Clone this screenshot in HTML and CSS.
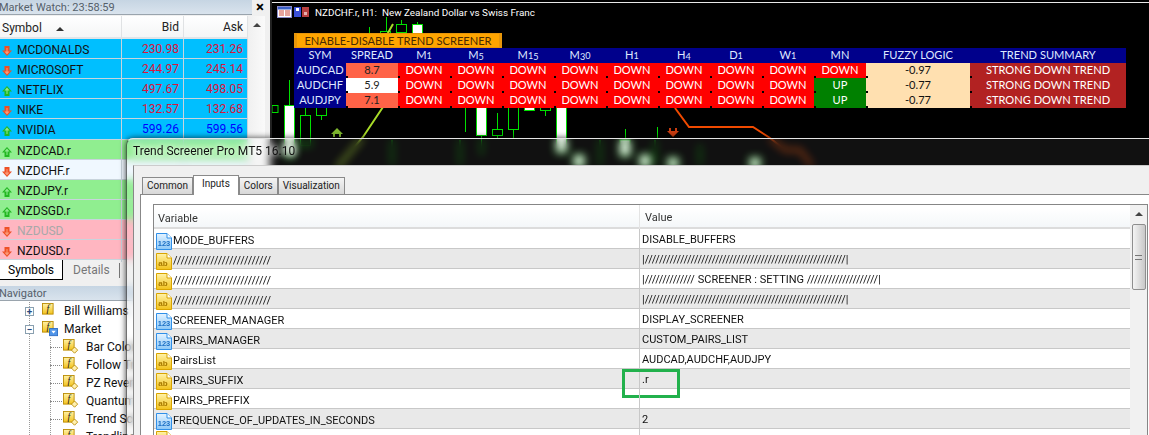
FILE: index.html
```html
<!DOCTYPE html>
<html lang="en">
<head>
<meta charset="utf-8">
<title>Trend Screener Pro MT5</title>
<link rel="stylesheet" href="styles.css">
</head>
<body>
<svg class="defs" width="0" height="0" aria-hidden="true">
  <defs>
    <linearGradient id="gy" x1="0" y1="0" x2="0" y2="1"><stop offset="0" stop-color="#fff2a8"/><stop offset="1" stop-color="#f2c21c"/></linearGradient>
    <linearGradient id="gb" x1="0" y1="0" x2="0" y2="1"><stop offset="0" stop-color="#e4f3ff"/><stop offset="1" stop-color="#8cc8f8"/></linearGradient>
    <symbol id="up" viewBox="0 0 10 10"><path d="M5 0 10 5.500H7.500V10H2.500V5.500H0Z" fill="#22b822"/><path d="M5 1.500 7.500 4.500H5.500V8H4.500V4.500H2.500Z" fill="#8fe88f"/></symbol>
    <symbol id="down" viewBox="0 0 10 10"><path d="M5 10 10 4.500H7.500V0H2.500V4.500H0Z" fill="#ee5026"/><path d="M5 8.500 7.500 5.500H5.500V2H4.500V5.500H2.500Z" fill="#fb9a78"/></symbol>
    <symbol id="num" viewBox="0 0 16 17"><path d="M.5.5H11L15.500 5V16.500H.5Z" fill="url(#gb)" stroke="#2f8fe8"/><path d="M11 .5V5H15.500" fill="#fff" stroke="#2f8fe8"/><text x="8" y="12.500" font-family="Liberation Sans" font-size="7.500" font-weight="700" fill="#1b6fc4" text-anchor="middle">123</text></symbol>
    <symbol id="str" viewBox="0 0 16 17"><path d="M.5.5H11L15.500 5V16.500H.5Z" fill="url(#gy)" stroke="#d9a400"/><path d="M11 .5V5H15.500" fill="#fff" stroke="#d9a400"/><text x="7" y="12.500" font-family="Liberation Sans" font-size="8" font-weight="700" fill="#a87a00" text-anchor="middle">ab</text></symbol>
    <symbol id="fn" viewBox="0 0 18 18"><rect x=".5" y=".5" width="12" height="12" fill="url(#gy)" stroke="#b98a00"/><text x="6.500" y="10.500" font-family="Liberation Serif" font-size="11" font-style="italic" fill="#222" text-anchor="middle">f</text><path d="M13 9 16.500 12.500 13 16 9.500 12.500Z" fill="#fff0b0" stroke="#b98a00"/></symbol>
    <symbol id="fnplain" viewBox="0 0 18 18"><rect x=".5" y=".5" width="12" height="12" fill="url(#gy)" stroke="#b98a00"/><text x="6.500" y="10.500" font-family="Liberation Serif" font-size="11" font-style="italic" fill="#222" text-anchor="middle">f</text></symbol>
    <symbol id="fnfolder" viewBox="0 0 18 18"><rect x=".5" y=".5" width="12" height="12" fill="url(#gy)" stroke="#b98a00"/><text x="6.500" y="10.500" font-family="Liberation Serif" font-size="11" font-style="italic" fill="#222" text-anchor="middle">f</text><rect x="8.500" y="8.500" width="9" height="8" fill="#4f94e8" stroke="#2b6cc4"/><path d="M10.500 11H15.500L13 14Z" fill="#fff"/></symbol>
  </defs>
</svg>

<div class="desktop">
  <aside class="side">
    <section class="watch">
      <header class="panel-title"><span class="panel-name">Market Watch: 23:58:59</span><span class="close">×</span></header>
      <div class="watch-body">
        <div class="quotes">
          <div class="qrow qhead"><span class="qsym">Symbol <i class="sort"></i></span><span class="qnum">Bid</span><span class="qnum">Ask</span></div>
          <div class="qrow blue"><span class="qsym"><svg class="arrow"><use href="#down"/></svg>MCDONALDS</span><span class="qnum red">230.98</span><span class="qnum red">231.26</span></div>
          <div class="qrow blue"><span class="qsym"><svg class="arrow"><use href="#down"/></svg>MICROSOFT</span><span class="qnum red">244.97</span><span class="qnum red">245.14</span></div>
          <div class="qrow blue"><span class="qsym"><svg class="arrow"><use href="#up"/></svg>NETFLIX</span><span class="qnum red">497.67</span><span class="qnum red">498.05</span></div>
          <div class="qrow blue"><span class="qsym"><svg class="arrow"><use href="#down"/></svg>NIKE</span><span class="qnum red">132.57</span><span class="qnum red">132.68</span></div>
          <div class="qrow blue tall"><span class="qsym"><svg class="arrow"><use href="#up"/></svg>NVIDIA</span><span class="qnum bl">599.26</span><span class="qnum bl">599.56</span></div>
          <div class="qrow green"><span class="qsym"><svg class="arrow"><use href="#up"/></svg>NZDCAD.r</span><span></span><span></span></div>
          <div class="qrow alice"><span class="qsym"><svg class="arrow"><use href="#down"/></svg>NZDCHF.r</span><span></span><span></span></div>
          <div class="qrow green"><span class="qsym"><svg class="arrow"><use href="#up"/></svg>NZDJPY.r</span><span></span><span></span></div>
          <div class="qrow green"><span class="qsym"><svg class="arrow"><use href="#up"/></svg>NZDSGD.r</span><span></span><span></span></div>
          <div class="qrow pink off"><span class="qsym"><svg class="arrow"><use href="#down"/></svg>NZDUSD</span><span></span><span></span></div>
          <div class="qrow pink"><span class="qsym"><svg class="arrow"><use href="#down"/></svg>NZDUSD.r</span><span></span><span></span></div>
        </div>
        <div class="vscroll"><i class="tri"></i></div>
      </div>
      <nav class="side-tabs"><span class="stab active">Symbols</span><span class="stab">Details</span></nav>
    </section>
    <section class="nav">
      <header class="panel-title nav-title"><span class="panel-name">Navigator</span></header>
      <ul class="tree">
        <li class="node lvl1"><i class="box">+</i><svg class="fico"><use href="#fnplain"/></svg>Bill Williams</li>
        <li class="node lvl1"><i class="box">−</i><svg class="fico"><use href="#fnfolder"/></svg>Market</li>
        <li class="node lvl2"><svg class="fico"><use href="#fn"/></svg>Bar Colors</li>
        <li class="node lvl2"><svg class="fico"><use href="#fn"/></svg>Follow Trend</li>
        <li class="node lvl2"><svg class="fico"><use href="#fn"/></svg>PZ Reversal</li>
        <li class="node lvl2"><svg class="fico"><use href="#fn"/></svg>Quantum</li>
        <li class="node lvl2"><svg class="fico"><use href="#fn"/></svg>Trend Screener</li>
        <li class="node lvl2"><svg class="fico"><use href="#fn"/></svg>Trendline</li>
      </ul>
    </section>
  </aside>

  <main class="chart">
    <svg class="candles" viewBox="272 0 877 435" width="877" height="435" aria-hidden="true">
      <g fill="none" stroke="#00e000" stroke-width="1">
        <path d="M289.500 80V105M305.500 108V115M321.500 116V120M369.500 27V33M386.500 17V32M401.500 20V24M417.500 22V24M465.500 108V132M497.500 113V129M497.500 135V138M513.500 129V138M545.500 111V116M625.500 129V138M657.500 127V138"/>
        <path d="M289.500 137V160M481.500 135V155M392 140V165M460 140V165M600 140V165M655 140V165M700 145V165"/>
        <rect x="272" y="105.500" width="6" height="7"/>
        <rect x="300.500" y="115.500" width="10" height="30"/>
        <rect x="316.500" y="107.500" width="10" height="8"/>
        <rect x="380.500" y="31.500" width="10" height="4"/>
        <rect x="396.500" y="24.500" width="10" height="8"/>
        <rect x="492.500" y="129.500" width="10" height="6"/>
        <rect x="508.500" y="100.500" width="10" height="29"/>
        <rect x="540.500" y="100.500" width="10" height="10"/>
        <g fill="#fff">
          <rect x="284.500" y="105.500" width="10" height="50"/>
          <rect x="412.500" y="24.500" width="10" height="12"/>
          <rect x="476.500" y="100.500" width="10" height="35"/>
          <rect x="524.500" y="100.500" width="10" height="10"/>
          <rect x="556.500" y="100.500" width="10" height="52"/>
          <rect x="620" y="140" width="10" height="16"/>
          <rect x="574" y="155" width="10" height="12"/>
          <rect x="640" y="155" width="10" height="12"/>
          <rect x="668" y="158" width="10" height="10"/>
          <rect x="750" y="158" width="10" height="10"/>
        </g>
      </g>
      <path d="M337 168 363 137 383 107 384 40 393 24" fill="none" stroke="#a8dc28" stroke-width="2"/>
      <path d="M337 128 343 134H341V137H339V134H335V137H333V134H331Z" fill="#7fb82e"/>
      <path d="M675 108 689 127H753L770 138 785 150H800L812 166" fill="none" stroke="#f04a00" stroke-width="2"/>
      <path d="M673 137 679 131H677V128H675V131H671V128H669V131H667Z" fill="#c83c10"/>
    </svg>
    <div class="chart-head">
      <svg class="cico" viewBox="0 0 15 12"><rect x=".5" y=".5" width="14" height="11" fill="#fff" stroke="#8a8ac8"/><rect x="1" y="1" width="13" height="2.500" fill="#3a60c8"/><path d="M2 5H7M8 5H13M2 7H7M8 7H13M2 9H7M8 9H13" stroke="#d04a3a"/></svg>
      <svg class="cico" viewBox="0 0 15 12"><rect x="0" y="1" width="7" height="10" fill="#3a50d8"/><rect x="8" y="1" width="7" height="10" fill="#b84040"/><rect x="2" y="2" width="3" height="3" fill="#fff"/><rect x="10" y="6" width="3" height="3" fill="#e8b0b0"/></svg>
      <span class="chart-name">NZDCHF.r, H1:&nbsp; New Zealand Dollar vs Swiss Franc</span>
    </div>
    <div class="screener">
      <div class="toggle">ENABLE-DISABLE TREND SCREENER</div>
      <div class="grid">
        <span class="h">SYM</span><span class="h">SPREAD</span><span class="h">M<i class="os">1</i></span><span class="h">M<i class="os low">5</i></span><span class="h">M<i class="os">1</i><i class="os low">5</i></span><span class="h">M<i class="os low">3</i><i class="os">0</i></span><span class="h">H<i class="os">1</i></span><span class="h">H<i class="os low">4</i></span><span class="h">D<i class="os">1</i></span><span class="h">W<i class="os">1</i></span><span class="h">MN</span><span class="h">FUZZY LOGIC</span><span class="h">TREND SUMMARY</span>

        <span class="h">AUDCAD</span><span class="sp">8.7</span><span class="d">DOWN</span><span class="d">DOWN</span><span class="d">DOWN</span><span class="d">DOWN</span><span class="d">DOWN</span><span class="d">DOWN</span><span class="d">DOWN</span><span class="d">DOWN</span><span class="d">DOWN</span><span class="fz">-0.97</span><span class="ts">STRONG DOWN TREND</span>

        <span class="h">AUDCHF</span><span class="sp lo">5.9</span><span class="d">DOWN</span><span class="d">DOWN</span><span class="d">DOWN</span><span class="d">DOWN</span><span class="d">DOWN</span><span class="d">DOWN</span><span class="d">DOWN</span><span class="d">DOWN</span><span class="u">UP</span><span class="fz">-0.77</span><span class="ts">STRONG DOWN TREND</span>

        <span class="h">AUDJPY</span><span class="sp">7.1</span><span class="d">DOWN</span><span class="d">DOWN</span><span class="d">DOWN</span><span class="d">DOWN</span><span class="d">DOWN</span><span class="d">DOWN</span><span class="d">DOWN</span><span class="d">DOWN</span><span class="u">UP</span><span class="fz">-0.77</span><span class="ts">STRONG DOWN TREND</span>
      </div>
    </div>
  </main>

  <section class="dialog">
    <h1 class="dlg-title">Trend Screener Pro MT5 16.10</h1>
    <div class="client">
      <div class="tabs">
        <span class="tab">Common</span><span class="tab active">Inputs</span><span class="tab">Colors</span><span class="tab">Visualization</span>
      </div>
      <div class="tab-body">
        <div class="list">
          <div class="list-main">
            <div class="lrow lhead"><span class="var">Variable</span><span class="val">Value</span></div>
            <div class="lrow"><span class="var"><svg class="tico"><use href="#num"/></svg>MODE_BUFFERS</span><span class="val">DISABLE_BUFFERS</span></div>
            <div class="lrow alt"><span class="var"><svg class="tico"><use href="#str"/></svg><span class="slashes">//////////////////////////</span></span><span class="val vslashes">|/////////////////////////////////////////////////////////|</span></div>
            <div class="lrow"><span class="var"><svg class="tico"><use href="#str"/></svg><span class="slashes">//////////////////////////</span></span><span class="val">|<span class="vslashes">//////////////</span> SCREENER : SETTING <span class="vslashes">////////////////////</span>|</span></div>
            <div class="lrow alt"><span class="var"><svg class="tico"><use href="#str"/></svg><span class="slashes">//////////////////////////</span></span><span class="val vslashes">|/////////////////////////////////////////////////////////|</span></div>
            <div class="lrow"><span class="var"><svg class="tico"><use href="#num"/></svg>SCREENER_MANAGER</span><span class="val">DISPLAY_SCREENER</span></div>
            <div class="lrow alt"><span class="var"><svg class="tico"><use href="#num"/></svg>PAIRS_MANAGER</span><span class="val">CUSTOM_PAIRS_LIST</span></div>
            <div class="lrow"><span class="var"><svg class="tico"><use href="#str"/></svg>PairsList</span><span class="val">AUDCAD,AUDCHF,AUDJPY</span></div>
            <div class="lrow alt"><span class="var"><svg class="tico"><use href="#str"/></svg>PAIRS_SUFFIX</span><span class="val mark">.r</span></div>
            <div class="lrow"><span class="var"><svg class="tico"><use href="#str"/></svg>PAIRS_PREFFIX</span><span class="val"></span></div>
            <div class="lrow alt"><span class="var"><svg class="tico"><use href="#num"/></svg>FREQUENCE_OF_UPDATES_IN_SECONDS</span><span class="val">2</span></div>
            <div class="lrow"><span class="var"><svg class="tico"><use href="#str"/></svg></span><span class="val"></span></div>
          </div>
          <div class="list-scroll"><i class="tri"></i><div class="thumb"><i class="grip"></i></div></div>
        </div>
      </div>
    </div>
  </section>
</div>
</body>
</html>
```
FILE: styles.css
```css
* { box-sizing: border-box; }
html, body { margin: 0; height: 435px; overflow: hidden; background: #f0f0f0; }
body { font-family: "Roboto", "Liberation Sans", sans-serif; font-size: 12px; color: #111; }
.defs { position: absolute; }
.desktop { display: flex; width: 1149px; height: 435px; position: relative; overflow: hidden; }

/* left column */
.side { width: 272px; flex: none; display: flex; flex-direction: column; background: #f0f0f0; border-right: 2px solid #222; }
.panel-title { height: 15px; display: flex; justify-content: space-between; align-items: center; background: linear-gradient(#c6d5e3, #d9e3ed); width: 252px; position: relative; border-bottom: 1px solid #9aa4ad; }
.panel-name { font-size: 11px; color: #55606a; margin-left: -1px; white-space: nowrap; }
.close { position: absolute; left: 256px; top: 0; font-size: 15px; font-weight: 700; color: #000; line-height: 15px; }
.watch-body { display: flex; margin-top: 1px; }
.quotes { width: 248px; flex: none; }
.qrow { display: grid; grid-template-columns: 122px 62px 64px; height: 20px; align-items: stretch; border-bottom: 1px solid #c8d4dc; font-size: 12px; line-height: 21px; }
.qrow > span { border-right: 1px solid #c8d4dc; }
.tall { height: 21px; }
.qhead { height: 23px; background: linear-gradient(#fff, #f4f5f6); line-height: 23px; border-bottom: 2px solid #e0e4e8; color: #222; }
.qhead > span { border-right: 1px solid #e0e2e4; }
.qsym { display: flex; align-items: center; white-space: nowrap; padding: 1px 0 0 2px; }
.sort { width: 0; height: 0; border-left: 4px solid transparent; border-right: 4px solid transparent; border-bottom: 4px solid #333; margin-left: 14px; }
.qnum { text-align: right; padding-right: 4px; }
.arrow { width: 10px; height: 10px; margin-right: 5px; flex: none; }
.blue { background: #00bfff; }
.green { background: #90ee90; }
.alice { background: #f0f8ff; }
.pink { background: #ffb6c1; }
.off { color: #a8a8a8; }
.red { color: #dc143c; }
.bl { color: #0000ff; }
.vscroll { width: 17px; flex: none; background: linear-gradient(90deg, #f0f0f0, #fafafa); display: flex; justify-content: center; padding-top: 7px; }
.tri { display: block; width: 0; height: 0; border-left: 4px solid transparent; border-right: 4px solid transparent; border-bottom: 4px solid #444; }
.side-tabs { display: flex; height: 20px; font-size: 12px; background: #f0f0f0; }
.stab { padding: 1px 0 0 10px; width: 57px; color: #777; border-right: 1px solid #777; height: 15px; margin-top: 3px; line-height: 13px; }
.stab.active { width: 63px; height: 20px; margin-top: 0; padding-left: 8px; background: #fff; color: #000; border: 1px solid #000; border-top: 0; border-left: 0; line-height: 19px; }
.nav { margin-top: 6px; flex: 1; min-height: 0; background: #fff; }
.nav-title { width: 270px; }
.tree { list-style: none; margin: 1px 0 0; padding: 0; font-size: 12px; background-image: linear-gradient(#999 50%, transparent 50%); background-size: 1px 2px; background-repeat: repeat-y; background-position: 29px 0; }
.node { display: flex; align-items: center; height: 18px; white-space: nowrap; }
.lvl1 { padding-left: 25px; }
.lvl2 { padding-left: 63px; background-image: linear-gradient(#999 50%, transparent 50%); background-size: 1px 2px; background-repeat: repeat-y; background-position: 50px 0; }
.lvl2::before { content: ""; width: 12px; margin-left: -13px; margin-right: 1px; border-top: 1px dotted #888; }
.box { width: 9px; height: 9px; border: 1px solid #8aa0b0; background: #fff; font-style: normal; font-size: 10px; line-height: 7px; text-align: center; margin-right: 8px; color: #2a4a80; font-weight: 700; }
.fico { width: 16px; height: 16px; margin-right: 6px; flex: none; }
.lvl2 .fico { margin-right: 7px; }

/* chart */
.chart { flex: 1; position: relative; background: #000; min-width: 0; }
.chart::before { content: ""; position: absolute; left: 0; right: 0; top: 2px; height: 1px; background: #e8e8e8; }
.candles { position: absolute; left: 0; top: 0; }
.chart-head { position: absolute; left: 5px; top: 6px; display: flex; align-items: center; gap: 2px; color: #fff; font-size: 9.900px; }
.cico { width: 15px; height: 12px; }
.chart-name { margin-left: 4px; white-space: nowrap; }
.screener { position: absolute; left: 22px; top: 33px; width: 832px; font-family: "Lato", "Liberation Sans", sans-serif; font-size: 11.100px; }
.toggle { width: 208px; height: 15px; line-height: 13px; background: #ffa500; border: 1px solid #e8960a; border-width: 1px 3px; color: #4a2a00; text-align: center; white-space: nowrap; }
.grid { display: grid; grid-template-columns: repeat(11, 52px) 104px 156px; grid-auto-rows: 15px; }
.grid > span { display: flex; align-items: center; justify-content: center; white-space: nowrap; color: #fff; padding-bottom: 2px; }
.grid > span:not(.h) { background-image: linear-gradient(#000, #000); background-size: 2px 2px; background-position: 0 100%; background-repeat: no-repeat; }
.grid .h { background-color: #00008b; color: #dfe8ff; }
.grid .sp { background-color: #ff6347; color: #222; }
.grid .sp.lo { background-color: #fff; }
.grid .d { background-color: #f00; }
.grid .u { background-color: #008000; }
.grid .fz { background-color: #ffe0b0; color: #111; }
.grid .ts { background-color: #b22222; }
.os { font-style: normal; font-size: .82em; position: relative; top: 1px; }
.os.low { top: 2px; }

/* dialog */
.dialog { position: absolute; left: 126px; top: 138px; width: 1040px; height: 320px; padding: 0 0 0 6px; border: 1px solid rgba(20,20,20,.6); border-top: 1px solid #e4e4e4; border-top-left-radius: 7px; background: rgba(235,235,235,.07); backdrop-filter: blur(4px); box-shadow: 0 0 6px rgba(0,0,0,.75); }
.dlg-title { margin: 0; height: 26px; font-size: 12px; font-weight: 400; line-height: 25px; color: #111; white-space: nowrap; text-shadow: 0 0 5px #fff, 0 0 8px #fff; }
.client { background: #f0f0f0; height: 290px; border: 1px solid #888; border-top-color: #ccc; padding: 9px 0 0 6px; }
.tabs { display: flex; height: 19px; padding-left: 2px; align-items: flex-end; position: relative; z-index: 1; }
.tab { height: 17px; padding: 0 4px; line-height: 16px; border: 1px solid #8a8a8a; border-bottom: 0; background: linear-gradient(#f4f4f4, #d8d8d8); font-size: 10px; color: #222; white-space: nowrap; }
.tab.active { height: 20px; background: #fff; margin-bottom: -1px; padding: 0 8px; line-height: 16px; }
.tab-body { background: #fff; border: 1px solid #888; border-right: 0; padding: 9px 0 0 12px; height: 260px; }
.list { display: flex; width: 995px; height: 250px; border: 1px solid #868686; }
.list-main { flex: 1; min-width: 0; }
.lrow { display: grid; grid-template-columns: 485px 1fr; height: 20px; border-bottom: 1px solid #c8c8c8; font-size: 11px; line-height: 22px; }
.lhead { height: 24px; line-height: 25px; background: linear-gradient(#fff 15%, #f4f7f9); border-bottom: 2px solid #dcdcdc; color: #333; }
.alt { background: #e9e9e9; }
.var { display: flex; align-items: center; padding: 1px 0 0 2px; white-space: nowrap; }
.lhead .var { padding-left: 4px; }
.val { padding-left: 2px; border-left: 1px solid #c8c8c8; white-space: nowrap; position: relative; }
.lhead .val { border-left: 1px solid #e4e4e4; padding-left: 5px; }
.slashes { letter-spacing: .4px; }
.vslashes { letter-spacing: .17px; }
.tico { width: 16px; height: 17px; margin-right: 1px; flex: none; }
.mark::after { content: ""; position: absolute; left: -18px; top: 0; width: 52px; height: 23px; border: 3px solid #22b14c; }
.list-scroll { width: 17px; flex: none; background: #f1f1f1; display: flex; flex-direction: column; align-items: center; padding-top: 7px; }
.thumb { width: 14px; height: 66px; margin-top: 8px; border: 1px solid #8e8e8e; border-radius: 2px; background: linear-gradient(90deg, #f4f4f4, #c8c8c8); display: flex; align-items: center; justify-content: center; }
.grip { display: block; width: 7px; height: 5px; border-top: 1px solid #777; border-bottom: 1px solid #777; }
```
